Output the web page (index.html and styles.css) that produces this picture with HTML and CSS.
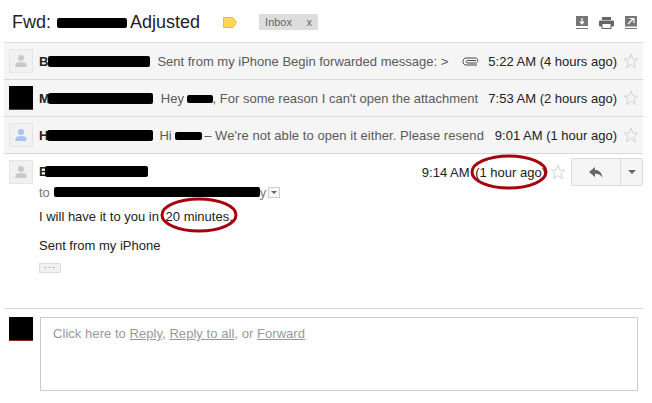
FILE: index.html
```html
<!DOCTYPE html>
<html>
<head>
  <title>Fwd: Adjusted</title>
  <link rel="stylesheet" href="styles.css">
</head>
<body>
  <div class="header">
    <h1 class="subject">Fwd: <span class="bar bar-subject"></span> Adjusted</h1>
    <svg class="label-icon" width="14" height="11" viewBox="0 0 14 11"><path d="M0.5 0.5H10L13.5 5.5L10 10.5H0.5Z" fill="#fbd75b" stroke="#e8b94a"/></svg>
    <span class="chip"><span>Inbox</span><span>x</span></span>
    <div class="actions">
      <svg width="12" height="13" viewBox="0 0 12 13"><rect width="12" height="10" fill="#777"/><rect y="12" width="12" height="1" fill="#777"/><path d="M6 2V7M4 5.5L6 7.8L8 5.5" fill="none" stroke="#fff" stroke-width="1.2"/></svg>
      <svg width="15" height="12" viewBox="0 0 15 12"><rect x="3" width="9" height="3" fill="#666"/><rect y="3.5" width="15" height="6" rx="1" fill="#666"/><rect x="3" y="6.5" width="9" height="5" fill="#fff" stroke="#666"/></svg>
      <svg width="12" height="13" viewBox="0 0 12 13"><rect width="12" height="10.5" fill="#777"/><rect y="12" width="12" height="1" fill="#777"/><path d="M3 8L8 3M4.5 2.5H9V7" fill="none" stroke="#fff" stroke-width="1.2"/></svg>
    </div>
  </div>

  <div class="row">
    <div class="avatar"><svg width="14" height="14" viewBox="0 0 14 14"><circle cx="7" cy="4" r="3" fill="#c9c9c9"/><path d="M1.500 13V10.500C1.500 8.800 4 8 7 8S12.500 8.800 12.500 10.500V13Z" fill="#c9c9c9"/></svg></div>
    <div class="sender"><b>B</b><span class="bar bar-name1"></span></div>
    <div class="snippet snippet-1">Sent from my iPhone Begin forwarded message: &gt;</div>
    <svg class="clip" width="17" height="9" viewBox="0 0 17 9"><path d="M14 3.500H5.500C4 3.500 4 6 5.500 6H13.500C16.500 6 16.500 1 13.500 1H4C0 1 0 8 4 8H15" fill="none" stroke="#333" stroke-width="0.900"/></svg>
    <div class="time">5:22 AM (4 hours ago)</div>
    <svg class="star" width="16" height="16" viewBox="0 0 16 16"><path d="M8 1L9.800 6H15L10.800 9.200L12.400 14.700L8 11.400L3.600 14.700L5.200 9.200L1 6H6.200Z" fill="none" stroke="#d4d4d4"/></svg>
  </div>
  <div class="row">
    <div class="avatar avatar-black"></div>
    <div class="sender"><b>M</b><span class="bar bar-name2"></span></div>
    <div class="snippet snippet-2">Hey <span class="bar bar-hey"></span>, For some reason I can't open the attachment</div>
    <div class="time">7:53 AM (2 hours ago)</div>
    <svg class="star" width="16" height="16" viewBox="0 0 16 16"><path d="M8 1L9.800 6H15L10.800 9.200L12.400 14.700L8 11.400L3.600 14.700L5.200 9.200L1 6H6.200Z" fill="none" stroke="#d4d4d4"/></svg>
  </div>
  <div class="row">
    <div class="avatar"><svg width="14" height="14" viewBox="0 0 14 14"><circle cx="7" cy="4" r="3" fill="#a9c4f0"/><path d="M1.500 13V10.500C1.500 8.800 4 8 7 8S12.500 8.800 12.500 10.500V13Z" fill="#a9c4f0"/></svg></div>
    <div class="sender"><b>H</b><span class="bar bar-name3"></span></div>
    <div class="snippet snippet-3">Hi <span class="bar bar-hi"></span> – We're not able to open it either. Please resend</div>
    <div class="time">9:01 AM (1 hour ago)</div>
    <svg class="star" width="16" height="16" viewBox="0 0 16 16"><path d="M8 1L9.800 6H15L10.800 9.200L12.400 14.700L8 11.400L3.600 14.700L5.200 9.200L1 6H6.200Z" fill="none" stroke="#d4d4d4"/></svg>
  </div>

  <div class="message">
    <div class="avatar avatar-open"><svg width="14" height="14" viewBox="0 0 14 14"><circle cx="7" cy="4" r="3" fill="#c9c9c9"/><path d="M1.500 13V10.500C1.500 8.800 4 8 7 8S12.500 8.800 12.500 10.500V13Z" fill="#c9c9c9"/></svg></div>
    <div class="msg-main">
      <div class="msg-top">
        <div class="sender sender-open"><b>B</b><span class="bar bar-name4"></span></div>
        <div class="msg-time">9:14 AM <span class="circled circled-time">(1 hour ago)<svg class="ring ring-time" width="78" height="36" viewBox="0 0 78 36"><ellipse cx="39" cy="18" rx="37" ry="16" fill="none" stroke="#a5000e" stroke-width="3"/></svg></span></div>
        <svg class="star" width="16" height="16" viewBox="0 0 16 16"><path d="M8 1L9.800 6H15L10.800 9.200L12.400 14.700L8 11.400L3.600 14.700L5.200 9.200L1 6H6.200Z" fill="none" stroke="#d4d4d4"/></svg>
        <div class="reply-btn">
          <span class="reply-main"><svg width="14" height="11" viewBox="0 0 14 11"><path d="M6 0V3C10 3 13 5.500 13.500 11C12 8 10 6.800 6 6.800V10L0 5Z" fill="#666"/></svg></span>
          <span class="reply-more"><span class="caret"></span></span>
        </div>
      </div>
      <div class="recipients">to <span class="bar bar-to"></span> y <span class="details-btn"><span class="caret caret-small"></span></span></div>
      <p class="body-line">I will have it to you in <span class="circled circled-body">20 minutes.<svg class="ring ring-body" width="78" height="36" viewBox="0 0 78 36"><ellipse cx="39" cy="18" rx="37" ry="16" fill="none" stroke="#a5000e" stroke-width="3"/></svg></span></p>
      <p class="body-line body-sig">Sent from my iPhone</p>
      <div class="dots">&middot;&middot;&middot;</div>
    </div>
  </div>

  <div class="reply-area">
    <div class="avatar avatar-black"></div>
    <div class="reply-box">Click here to <u>Reply</u>, <u>Reply to all</u>, or <u>Forward</u></div>
  </div>
</body>
</html>
```

FILE: styles.css
```css
/* Conversation view */
body {
  margin: 0;
  font-family: "Liberation Sans", Arial, sans-serif;
  font-size: 13px;
  color: #222;
  background: #fff;
  overflow: hidden;
}

.bar {
  display: inline-block;
  height: 11px;
  background: #000;
  border-radius: 2px;
  vertical-align: middle;
}

.bar-subject { width: 70px; height: 10px; margin: 0 -1px 0 1px; }
.bar-name1 { width: 102px; }
.bar-name2 { width: 105px; margin-left: -2px; }
.bar-name3 { width: 106px; margin-left: -1px; }
.bar-name4 { width: 103px; margin-left: -3px; }
.bar-hey { width: 26px; height: 8px; margin-left: -1px; }
.bar-hi { width: 27px; height: 8px; margin-right: -2px; }
.bar-to { width: 206px; height: 10px; margin-right: -4px; }

.header {
  display: flex;
  align-items: center;
  height: 42px;
  margin: 0 9px 0 4px;
  border-bottom: 1px solid #d8d8d8;
}

.subject {
  margin: 2px 0 0 8px;
  font-size: 18px;
  font-weight: normal;
  color: #222;
}

.label-icon {
  margin: 3px 0 0 23px;
}

.chip {
  display: flex;
  justify-content: space-between;
  width: 47px;
  height: 16px;
  margin: 1px 0 0 22px;
  padding: 0 6px;
  line-height: 16px;
  font-size: 11px;
  color: #666;
  background: #ddd;
}

.actions {
  display: flex;
  align-items: center;
  gap: 11px;
  margin: 3px 6px 0 auto;
}

.row {
  display: flex;
  align-items: center;
  height: 36px;
  margin: 0 9px 0 4px;
  background: #f5f5f5;
  border-bottom: 1px solid #d8d8d8;
}

.avatar {
  display: flex;
  align-items: center;
  justify-content: center;
  flex: none;
  box-sizing: border-box;
  width: 24px;
  height: 24px;
  margin-left: 5px;
  background: #f1f1f1;
  border: 1px solid #e5e5e5;
}

.avatar-black {
  background: #000;
  border: none;
  border-bottom: 1px solid #8a2a1a;
}

.sender {
  display: flex;
  align-items: center;
  margin-left: 6px;
}

.sender b {
  color: #222;
}

.snippet {
  color: #5a5a5a;
  white-space: nowrap;
}

.snippet-1 { margin-left: 7px; }
.snippet-2 { margin-left: 8px; }
.snippet-3 { margin-left: 6px; letter-spacing: 0.060px; }

.clip {
  margin-left: 14px;
}

.time {
  margin-left: auto;
  color: #222;
  white-space: nowrap;
}

.star {
  flex: none;
  margin: 0 4px 0 6px;
}

.message {
  display: flex;
  height: 150px;
  margin: 0 9px 0 4px;
  padding-top: 4px;
}

.avatar-open {
  margin-top: 2px;
}

.msg-main {
  flex: 1;
  margin-left: 6px;
}

.msg-top {
  display: flex;
  align-items: center;
  height: 28px;
}

.sender-open {
  margin: 0 0 1px 0;
}

.msg-time {
  margin: 0 0 0 auto;
  white-space: nowrap;
}

.msg-top .star {
  margin: 0 5px 0 3px;
}

.circled {
  position: relative;
}

.circled-time {
  margin: 0 1px 0 2px;
}

.circled-body {
  margin-left: 3px;
}

/* hand drawn rings over the text */
.ring {
  position: absolute;
  pointer-events: none;
}

.ring-time {
  left: -5.500px;
  top: -11px;
}

.ring-body {
  left: -6px;
  top: -12px;
}

.reply-btn {
  display: flex;
  box-sizing: border-box;
  width: 72px;
  height: 28px;
  background: #f5f5f5;
  border: 1px solid #ddd;
  border-radius: 2px;
}

.reply-main {
  display: flex;
  align-items: center;
  justify-content: center;
  flex: 1;
  border-right: 1px solid #ddd;
}

.reply-more {
  display: flex;
  align-items: center;
  justify-content: center;
  width: 21px;
}

.caret {
  border-top: 4px solid #666;
  border-left: 4px solid transparent;
  border-right: 4px solid transparent;
}

.caret-small {
  border-top-width: 3px;
  border-left-width: 3px;
  border-right-width: 3px;
}

.recipients {
  display: flex;
  align-items: center;
  gap: 4px;
  margin-top: -2px;
  height: 16px;
  color: #777;
}

.details-btn {
  display: flex;
  align-items: center;
  justify-content: center;
  box-sizing: border-box;
  width: 12px;
  height: 11px;
  margin-left: -2px;
  background: #f8f8f8;
  border: 1px solid #ccc;
}

.body-line {
  margin: 9px 0 0;
  height: 16px;
  line-height: 16px;
}

.body-sig {
  margin-top: 13px;
}

.dots {
  box-sizing: border-box;
  width: 22px;
  height: 10px;
  margin-top: 9px;
  background: #f1f1f1;
  border: 1px solid #ddd;
  font-size: 9px;
  line-height: 7px;
  letter-spacing: 1px;
  text-align: center;
  color: #666;
}

.reply-area {
  display: flex;
  height: 86px;
  margin: 0 9px 0 4px;
  padding-top: 8px;
  border-top: 1px solid #d8d8d8;
}

.reply-box {
  box-sizing: border-box;
  width: 598px;
  height: 74px;
  margin: 0 0 0 7px;
  padding: 8px 12px;
  border: 1px solid #ccc;
  letter-spacing: 0.050px;
  color: #999;
}
```
